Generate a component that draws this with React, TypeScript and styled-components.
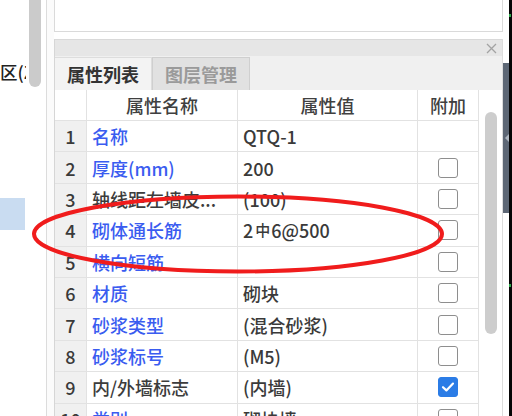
import React from "react";
import styled, { createGlobalStyle } from "styled-components";

const GlobalStyle = createGlobalStyle`
  html, body { margin: 0; padding: 0; background: #ffffff; }
  body {
    width: 512px; height: 416px; overflow: hidden;
    font-family: "Noto Sans CJK SC", "Noto Sans", sans-serif;
    color: #333333;
  }
  * { box-sizing: border-box; }
`;

const Page = styled.div`
  position: relative;
  display: flex;
  width: 512px;
  height: 416px;
  overflow: hidden;
  background: #ffffff;
`;

const LeftPane = styled.div`
  display: flex;
  width: 47px;
  height: 100%;
  border-right: 1px solid #dcdcdc;
`;

const LeftContent = styled.div`
  display: flex;
  flex-direction: column;
  width: 29px;
`;

const ZoneLabel = styled.div`
  margin-top: 59px;
  width: 26px;
  height: 25px;
  overflow: hidden;
  white-space: nowrap;
  font-size: 17.5px;
  font-weight: 500;
  line-height: 25px;
  color: #222222;
`;

const Highlight = styled.div`
  margin-top: 114px;
  width: 25px;
  height: 32px;
  background: #c9dcf1;
`;

const LeftScroll = styled.div`
  width: 12px;
`;

const LeftThumb = styled.div`
  width: 12px;
  height: 87px;
  background: #cbcbcb;
  border-radius: 0 0 6px 6px;
`;

const Gutter = styled.div`
  width: 7px;
  background: #fbfbfb;
`;

const Main = styled.div`
  display: flex;
  flex-direction: column;
  width: 449px;
  height: 100%;
`;

const TopBox = styled.div`
  height: 32px;
  background: #ffffff;
  border: 1px solid #dadada;
  border-top: none;
`;

const Spacer = styled.div`
  height: 7px;
`;

const Panel = styled.div`
  flex: 1;
  display: flex;
  flex-direction: column;
  border-left: 1px solid #d6d6d6;
  border-right: 1px solid #dcdcdc;
  min-height: 0;
`;

const PanelHead = styled.div`
  height: 17px;
  display: flex;
  align-items: center;
  justify-content: flex-end;
  padding-right: 5px;
  background: #e6e6e6;
  border-top: 1px solid #d9d9d9;
`;

const TabBar = styled.div`
  height: 34px;
  display: flex;
  align-items: flex-end;
  background: #f0f0f0;
`;

const Tab = styled.div<{ $active?: boolean }>`
  width: ${(p) => (p.$active ? "97px" : "98px")};
  height: 33px;
  display: flex;
  align-items: center;
  justify-content: center;
  font-size: 18px;
  font-weight: 700;
  color: ${(p) => (p.$active ? "#333333" : "#9a9a9a")};
  background: ${(p) => (p.$active ? "#f3f3f3" : "#e1e1e1")};
  border: 1px solid ${(p) => (p.$active ? "#dddddd" : "#cfcfcf")};
  border-bottom: none;
  border-left: ${(p) => (p.$active ? "none" : "1px solid #cfcfcf")};
`;

const TableArea = styled.div`
  flex: 1;
  display: flex;
  background: #ffffff;
  min-height: 0;
`;

const Cells = styled.div`
  width: 424px;
  display: flex;
  flex-direction: column;
`;

const Row = styled.div<{ $head?: boolean }>`
  flex: none;
  display: grid;
  grid-template-columns: 32px 151px 180px 61px;
  height: ${(p) => (p.$head ? "31px" : "31.4px")};
`;

const Cell = styled.div<{ $align?: "center" | "left"; $shade?: boolean }>`
  display: flex;
  align-items: center;
  justify-content: ${(p) => (p.$align === "left" ? "flex-start" : "center")};
  padding-left: ${(p) => (p.$align === "left" ? "5px" : "0")};
  border-right: 1px solid #e2e2e2;
  border-bottom: 1px solid #e2e2e2;
  background: ${(p) => (p.$shade ? "#f0f0f0" : "#ffffff")};
  font-size: 18px;
  font-weight: 500;
  white-space: nowrap;
  overflow: hidden;
`;

const HeadText = styled.span`
  color: #404040;
`;

const NumText = styled.span`
  color: #3a3a3a;
`;

const NameText = styled.span<{ $blue?: boolean }>`
  color: ${(p) => (p.$blue ? "#3a5cf0" : "#3c3c3c")};
`;

const ValueText = styled.span`
  color: #3a3a3a;
`;

const Sym = styled.span`
  font-size: 15px;
  position: relative;
  top: -2px;
  margin: 0 1px 0 2px;
`;

const Box = styled.div<{ $checked?: boolean }>`
  width: 20px;
  height: 20px;
  border-radius: 3px;
  border: 1.5px solid ${(p) => (p.$checked ? "#2b7ce6" : "#8e8e8e")};
  background: ${(p) => (p.$checked ? "#2b7ce6" : "#ffffff")};
  display: flex;
  align-items: center;
  justify-content: center;
`;

const ScrollTrack = styled.div`
  width: 23px;
  padding-left: 6px;
  padding-top: 22px;
`;

const ScrollThumb = styled.div`
  width: 12px;
  height: 222px;
  border-radius: 6px;
  background: #cdcdcd;
`;

const RightEdge = styled.div`
  width: 6px;
  height: 100%;
  padding-top: 63px;
`;

const SideHandle = styled.div`
  width: 6px;
  height: 150px;
  background: #5d6775;
  display: flex;
  align-items: center;
  justify-content: flex-end;
`;

const BlackEdge = styled.div`
  width: 3px;
  height: 100%;
  background: #050505;
  display: flex;
  flex-direction: column;
`;

const GreenMark = styled.div<{ $top: number }>`
  margin-top: ${(p) => p.$top}px;
  width: 2px;
  height: 3px;
  background: #2fa84a;
`;

const Annotation = styled.svg`
  position: absolute;
  left: 0;
  top: 0;
  pointer-events: none;
`;

type RowData = {
  n: number;
  name: string;
  blue: boolean;
  value: React.ReactNode;
  cb: null | boolean;
};

const rows: RowData[] = [
  { n: 1, name: "名称", blue: true, value: "QTQ-1", cb: null },
  { n: 2, name: "厚度(mm)", blue: true, value: "200", cb: false },
  { n: 3, name: "轴线距左墙皮...", blue: false, value: "(100)", cb: false },
  {
    n: 4,
    name: "砌体通长筋",
    blue: true,
    value: (
      <>
        2<Sym>中</Sym>6@500
      </>
    ),
    cb: false,
  },
  { n: 5, name: "横向短筋", blue: true, value: "", cb: false },
  { n: 6, name: "材质", blue: true, value: "砌块", cb: false },
  { n: 7, name: "砂浆类型", blue: true, value: "(混合砂浆)", cb: false },
  { n: 8, name: "砂浆标号", blue: true, value: "(M5)", cb: false },
  { n: 9, name: "内/外墙标志", blue: false, value: "(内墙)", cb: true },
  { n: 10, name: "类别", blue: true, value: "砌块墙", cb: false },
];

function Check({ checked }: { checked: boolean }) {
  return (
    <Box $checked={checked}>
      {checked && (
        <svg width="14" height="12" viewBox="0 0 14 12">
          <path d="M2 6.2 L5.4 9.4 L12 2.6" fill="none" stroke="#ffffff" strokeWidth="2.2" strokeLinecap="round" strokeLinejoin="round" />
        </svg>
      )}
    </Box>
  );
}

export default function App() {
  return (
    <>
      <GlobalStyle />
      <Page>
        <LeftPane>
          <LeftContent>
            <ZoneLabel>区(Z</ZoneLabel>
            <Highlight />
          </LeftContent>
          <LeftScroll>
            <LeftThumb />
          </LeftScroll>
        </LeftPane>
        <Gutter />
        <Main>
          <TopBox />
          <Spacer />
          <Panel>
            <PanelHead>
              <svg width="11" height="11" viewBox="0 0 11 11">
                <path d="M1 1 L10 10 M10 1 L1 10" stroke="#a3a3a3" strokeWidth="1.3" />
              </svg>
            </PanelHead>
            <TabBar>
              <Tab $active>属性列表</Tab>
              <Tab>图层管理</Tab>
            </TabBar>
            <TableArea>
              <Cells>
                <Row $head>
                  <Cell />
                  <Cell><HeadText>属性名称</HeadText></Cell>
                  <Cell><HeadText>属性值</HeadText></Cell>
                  <Cell><HeadText>附加</HeadText></Cell>
                </Row>
                {rows.map((r) => (
                  <Row key={r.n}>
                    <Cell $shade><NumText>{r.n}</NumText></Cell>
                    <Cell $align="left"><NameText $blue={r.blue}>{r.name}</NameText></Cell>
                    <Cell $align="left"><ValueText>{r.value}</ValueText></Cell>
                    <Cell>{r.cb !== null && <Check checked={r.cb} />}</Cell>
                  </Row>
                ))}
              </Cells>
              <ScrollTrack>
                <ScrollThumb />
              </ScrollTrack>
            </TableArea>
          </Panel>
        </Main>
        <RightEdge>
          <SideHandle>
            <svg width="4" height="8" viewBox="0 0 4 8">
              <path d="M4 0 L0 4 L4 8 Z" fill="#aeb6c0" />
            </svg>
          </SideHandle>
        </RightEdge>
        <BlackEdge>
          <GreenMark $top={14} />
          <GreenMark $top={267} />
        </BlackEdge>
        <Annotation width="512" height="416" viewBox="0 0 512 416">
          <ellipse cx="238" cy="234" rx="204" ry="37.5" fill="none" stroke="#f01c1c" strokeWidth="4" />
        </Annotation>
      </Page>
    </>
  );
}
